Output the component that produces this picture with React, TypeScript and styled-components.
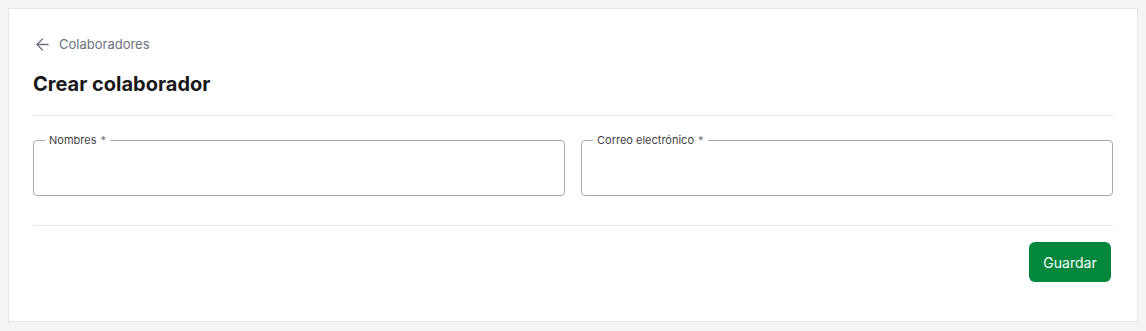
import { createGlobalStyle, styled } from "styled-components";
import { ArrowLeft } from "lucide-react";

const Global = createGlobalStyle`
  html, body {
    margin: 0;
    padding: 0;
    background: #f3f4f6;
    font-family: Inter, "Noto Sans", sans-serif;
  }
  * { box-sizing: border-box; }
`;

const Page = styled.div`
  padding: 8px;
`;

const Card = styled.div`
  background: #fff;
  border: 1px solid #e3e5e8;
  padding: 25px 24px 39px;
`;

const Breadcrumb = styled.a`
  display: flex;
  align-items: center;
  gap: 7px;
  height: 20px;
  color: #6b7280;
  font-size: 13px;
  text-decoration: none;
  cursor: pointer;
`;

const Title = styled.h1`
  margin: 16px 0 0;
  font-size: 20px;
  line-height: 28px;
  font-weight: 700;
  color: #18181b;
`;

const Divider = styled.hr<{ $top: number }>`
  border: none;
  border-top: 1px solid #e5e7eb;
  margin: ${(p) => p.$top}px 0 0;
`;

const Fields = styled.div`
  display: grid;
  grid-template-columns: 1fr 1fr;
  gap: 16px;
  margin-top: 17px;
`;

const Field = styled.fieldset`
  margin: 0;
  padding: 0 11px;
  border: 1px solid #a8a8a8;
  border-radius: 4px;
  min-width: 0;
`;

const Legend = styled.legend`
  padding: 0 4px;
  font-size: 11px;
  line-height: 14px;
  color: #3f3f46;

  span {
    color: #71717a;
    margin-left: 4px;
  }
`;

const Input = styled.input`
  display: block;
  width: 100%;
  height: 48px;
  border: none;
  outline: none;
  padding: 0 4px;
  font-family: inherit;
  font-size: 14px;
  background: transparent;
`;

const Actions = styled.div`
  display: flex;
  justify-content: flex-end;
  margin-top: 16px;
`;

const SaveButton = styled.button`
  height: 40px;
  width: 82px;
  margin-right: 2px;
  border: none;
  border-radius: 6px;
  background: #01883c;
  color: #fff;
  font-family: inherit;
  font-size: 14px;
  font-weight: 400;
  cursor: pointer;
`;

export default function App() {
  return (
    <Page>
      <Global />
      <Card>
        <Breadcrumb>
          <ArrowLeft size={19} strokeWidth={1.6} />
          Colaboradores
        </Breadcrumb>
        <Title>Crear colaborador</Title>
        <Divider $top={17} />
        <Fields>
          <Field>
            <Legend>
              Nombres<span>*</span>
            </Legend>
            <Input />
          </Field>
          <Field>
            <Legend>
              Correo electrónico<span>*</span>
            </Legend>
            <Input />
          </Field>
        </Fields>
        <Divider $top={29} />
        <Actions>
          <SaveButton>Guardar</SaveButton>
        </Actions>
      </Card>
    </Page>
  );
}
